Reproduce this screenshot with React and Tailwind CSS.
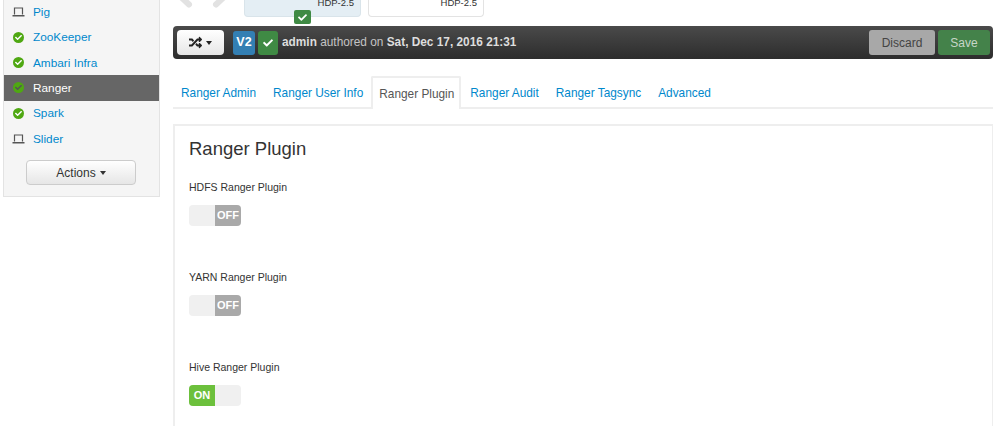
import React from "react";
import { FaCheck, FaRandom } from "react-icons/fa";

const services = [
  { name: "Pig", icon: "laptop" },
  { name: "ZooKeeper", icon: "ok" },
  { name: "Ambari Infra", icon: "ok" },
  { name: "Ranger", icon: "ok", active: true },
  { name: "Spark", icon: "ok" },
  { name: "Slider", icon: "laptop" },
];

const tabs = ["Ranger Admin", "Ranger User Info", "Ranger Plugin", "Ranger Audit", "Ranger Tagsync", "Advanced"];

function StatusIcon({ type, active }) {
  if (type === "laptop") {
    return (
      <svg width="13" height="10" viewBox="0 0 13 10" fill="none">
        <path d="M2.5 7.5V1h8v6.5" stroke="#555" strokeWidth="1.2" />
        <path d="M0.5 8h12v1.5h-12z" fill="#555" />
      </svg>
    );
  }
  return (
    <span className="w-[11px] h-[11px] rounded-full bg-[#4fa812] flex items-center justify-center">
      <FaCheck className={`w-[7px] h-[7px] ${active ? "text-[#555]" : "text-white"}`} />
    </span>
  );
}

function Toggle({ on }) {
  return (
    <div className="flex w-[52px] h-[21px] rounded-[4px] overflow-hidden bg-[#f0f0f0] text-[11px] font-bold text-white leading-[21px] text-center">
      {on && <span className="w-[26px] bg-[#6cc03c]">ON</span>}
      {!on && <span className="w-[26px]" />}
      {!on && <span className="w-[26px] bg-[#a9a9a9]">OFF</span>}
    </div>
  );
}

function Plugin({ label, on, last }) {
  return (
    <div className={last ? "" : "h-[90px]"}>
      <div className="text-[10.5px] leading-[16px] text-[#333] mb-[10px]">{label}</div>
      <Toggle on={on} />
    </div>
  );
}

export default function App() {
  return (
    <div className="w-[999px] h-[426px] overflow-hidden bg-white flex text-[12px] text-[#333] font-['Liberation_Sans',Arial,sans-serif]">
      {/* Sidebar */}
      <div className="w-[173px] shrink-0 pl-[3px]">
        <div className="w-[157px] h-[197px] overflow-hidden bg-[#f5f5f5] border border-t-0 border-[#e3e3e3] flex flex-col">
          <div className="-mt-[1px]">
            {services.map((s) => (
              <div
                key={s.name}
                className={`h-[25.4px] flex items-center ${s.active ? "bg-[#666666] text-white" : "text-[#0088cc]"}`}
              >
                <span className="w-[29px] pr-[1px] flex justify-center">
                  <StatusIcon type={s.icon} active={s.active} />
                </span>
                <span className="text-[11.8px] pt-[2px]">{s.name}</span>
              </div>
            ))}
          </div>
          <div className="flex mt-[9px] pl-[22px]">
            <button className="w-[110px] h-[25px] rounded-[4px] border border-[#cccccc] bg-gradient-to-b from-white to-[#e6e6e6] text-[12px] text-[#333] flex items-center justify-center gap-[4px]">
              Actions
              <span className="w-0 h-0 border-x-[3.5px] border-x-transparent border-t-[4px] border-t-[#333]" />
            </button>
          </div>
        </div>
      </div>

      {/* Main */}
      <div className="w-[820px] shrink-0">
        {/* Version cards */}
        <div className="h-[26px] relative">
          <svg width="60" height="8" viewBox="0 0 60 8" className="block">
            <path d="M8 -3 L16 4.5 M43 4.5 L51 -3" stroke="#e2e2e2" strokeWidth="6" strokeLinecap="round" fill="none" />
          </svg>
          <div className="absolute left-[71px] top-0 w-[117px] h-[17px] bg-[#e4eef4] border border-t-0 border-[#d9e4ea] rounded-b-[4px] text-[9.5px] text-[#333] text-right pr-[6px] leading-[5px]">
            HDP-2.5
          </div>
          <div className="absolute left-[195px] top-0 w-[116px] h-[17px] bg-white border border-t-0 border-[#e3e3e3] rounded-b-[4px] text-[9.5px] text-[#333] text-right pr-[6px] leading-[5px]">
            HDP-2.5
          </div>
          <div className="absolute left-[121px] top-[10px] w-[17px] h-[14px] rounded-[2px] bg-[#3f8a44] flex items-center justify-center">
            <FaCheck className="w-[9px] h-[9px] text-white" />
          </div>
        </div>

        {/* Version bar */}
        <div className="w-[820px] h-[33px] rounded-[4px] bg-gradient-to-b from-[#4a4a4a] to-[#2d2d2d] flex items-center pl-[4px] pr-[3px]">
          <button className="w-[47px] h-[25px] rounded-[4px] bg-gradient-to-b from-white to-[#e6e6e6] flex items-center justify-center gap-[4px] text-[#222]">
            <FaRandom className="w-[13px] h-[13px]" />
            <span className="w-0 h-0 border-x-[3.5px] border-x-transparent border-t-[4px] border-t-[#222]" />
          </button>
          <span className="ml-[9px] w-[22px] h-[24px] rounded-[3px] bg-[#337fb3] text-white text-[12.5px] font-bold flex items-center justify-center">V2</span>
          <span className="ml-[3px] w-[20px] h-[24px] rounded-[3px] bg-[#3f8a44] flex items-center justify-center">
            <FaCheck className="w-[10px] h-[10px] text-white" />
          </span>
          <span className="ml-[4px] text-[11.85px] text-[#c4c4c4]">
            <b className="text-[#dddddd]">admin</b> authored on <b className="text-[#dddddd]">Sat, Dec 17, 2016 21:31</b>
          </span>
          <button className="ml-auto w-[66px] h-[25px] rounded-[3px] bg-[#a8a8a8] text-[#444] text-[12px]">Discard</button>
          <button className="ml-[3px] w-[52px] h-[25px] rounded-[3px] bg-[#44824a] text-[#c7d6c8] text-[12px]">Save</button>
        </div>

        {/* Tabs */}
        <div className="w-[820px] mt-[17px] h-[33px] border-b-2 border-[#eeeeee] flex text-[11.85px]">
          {tabs.map((t) => (
            <div
              key={t}
              className={
                t === "Ranger Plugin"
                  ? "h-[33px] -ml-[1px] pl-[6px] pr-[5px] border-2 border-b-0 border-[#eeeeee] bg-white text-[#555] leading-[32px] rounded-t-[2px] mr-[1px]"
                  : "h-[31px] px-[8px] text-[#0088cc] leading-[34px] mr-[1px]"
              }
            >
              {t}
            </div>
          ))}
        </div>

        {/* Panel */}
        <div className="w-[820px] h-[400px] mt-[15px] border-t-2 border-l-2 border-r border-[#eeeeee] pl-[14px] pt-[11px]">
          <h2 className="text-[18.5px] leading-[24px] text-[#333] mb-[18px]">Ranger Plugin</h2>
          <Plugin label="HDFS Ranger Plugin" />
          <Plugin label="YARN Ranger Plugin" />
          <Plugin label="Hive Ranger Plugin" on last />
        </div>
      </div>
    </div>
  );
}
